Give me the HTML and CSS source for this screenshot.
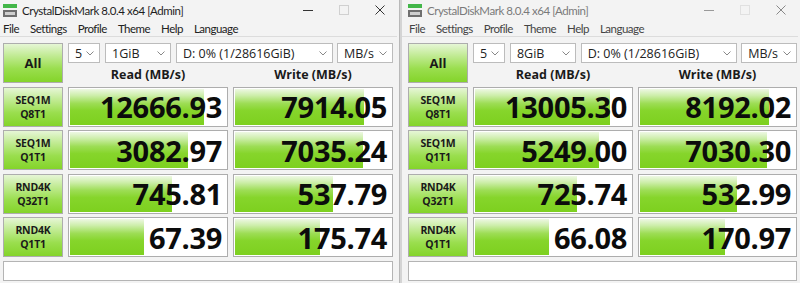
FILE: index.html
```html
<!DOCTYPE html>
<html>
<head>
<meta charset="utf-8">
<link rel="stylesheet" href="styles.css">
</head>
<body>
<div class="screen">
  <div class="win win-left">
    <div class="titlebar">
      <svg class="appicon" width="14" height="14" viewBox="0 0 14 14"><rect x="0" y="1" width="14" height="4" fill="#43b649"/><rect x="0" y="7" width="14" height="7" fill="#6f6f6f"/><rect x="2" y="9" width="10" height="3" fill="#cfcfcf"/></svg>
      <span class="title">CrystalDiskMark 8.0.4 x64 [Admin]</span>
      <div class="controls">
        <svg width="10" height="10" viewBox="0 0 10 10"><line x1="0" y1="5.5" x2="10" y2="5.5" stroke="#333" stroke-width="1"/></svg>
        <svg width="10" height="10" viewBox="0 0 10 10"><rect x="0.5" y="0.5" width="9" height="9" fill="none" stroke="#d0d0d0" stroke-width="1"/></svg>
        <svg width="10" height="10" viewBox="0 0 10 10"><path d="M0.5 0.5 L9.5 9.5 M9.5 0.5 L0.5 9.5" stroke="#333" stroke-width="1"/></svg>
      </div>
    </div>
    <div class="menubar"><span>File</span><span>Settings</span><span>Profile</span><span>Theme</span><span>Help</span><span>Language</span></div>
    <div class="main">
      <div class="btn all">All</div>
      <div class="combos">
        <div class="combo c-count"><span>5</span><svg width="8" height="5" viewBox="0 0 8 5"><polyline points="0.5,0.5 4,4 7.5,0.5" fill="none" stroke="#888"/></svg></div>
        <div class="combo c-size"><span>1GiB</span><svg width="8" height="5" viewBox="0 0 8 5"><polyline points="0.5,0.5 4,4 7.5,0.5" fill="none" stroke="#888"/></svg></div>
        <div class="combo c-drive"><span>D: 0% (1/28616GiB)</span><svg width="8" height="5" viewBox="0 0 8 5"><polyline points="0.5,0.5 4,4 7.5,0.5" fill="none" stroke="#888"/></svg></div>
        <div class="combo c-unit"><span>MB/s</span><svg width="8" height="5" viewBox="0 0 8 5"><polyline points="0.5,0.5 4,4 7.5,0.5" fill="none" stroke="#888"/></svg></div>
      </div>
      <div class="head">Read (MB/s)</div>
      <div class="head">Write (MB/s)</div>

      <div class="btn label">SEQ1M<br>Q8T1</div>
      <div class="meter"><div class="bar" style="width:85.0%"></div><span class="val">12666.93</span></div>
      <div class="meter"><div class="bar" style="width:81.6%"></div><span class="val">7914.05</span></div>

      <div class="btn label">SEQ1M<br>Q1T1</div>
      <div class="meter"><div class="bar" style="width:74.8%"></div><span class="val">3082.97</span></div>
      <div class="meter"><div class="bar" style="width:80.8%"></div><span class="val">7035.24</span></div>

      <div class="btn label">RND4K<br>Q32T1</div>
      <div class="meter"><div class="bar" style="width:64.5%"></div><span class="val">745.81</span></div>
      <div class="meter"><div class="bar" style="width:62.2%"></div><span class="val">537.79</span></div>

      <div class="btn label">RND4K<br>Q1T1</div>
      <div class="meter"><div class="bar" style="width:47.1%"></div><span class="val">67.39</span></div>
      <div class="meter"><div class="bar" style="width:54.1%"></div><span class="val">175.74</span></div>

      <div class="comment"></div>
    </div>
  </div>
  <div class="divider"></div>
  <div class="win win-right inactive">
    <div class="titlebar">
      <svg class="appicon" width="14" height="14" viewBox="0 0 14 14"><rect x="0" y="1" width="14" height="4" fill="#43b649"/><rect x="0" y="7" width="14" height="7" fill="#6f6f6f"/><rect x="2" y="9" width="10" height="3" fill="#cfcfcf"/></svg>
      <span class="title">CrystalDiskMark 8.0.4 x64 [Admin]</span>
      <div class="controls">
        <svg width="10" height="10" viewBox="0 0 10 10"><line x1="0" y1="5.5" x2="10" y2="5.5" stroke="#999" stroke-width="1"/></svg>
        <svg width="10" height="10" viewBox="0 0 10 10"><rect x="0.5" y="0.5" width="9" height="9" fill="none" stroke="#e0e0e0" stroke-width="1"/></svg>
        <svg width="10" height="10" viewBox="0 0 10 10"><path d="M0.5 0.5 L9.5 9.5 M9.5 0.5 L0.5 9.5" stroke="#888" stroke-width="1"/></svg>
      </div>
    </div>
    <div class="menubar"><span>File</span><span>Settings</span><span>Profile</span><span>Theme</span><span>Help</span><span>Language</span></div>
    <div class="main">
      <div class="btn all">All</div>
      <div class="combos">
        <div class="combo c-count"><span>5</span><svg width="8" height="5" viewBox="0 0 8 5"><polyline points="0.5,0.5 4,4 7.5,0.5" fill="none" stroke="#888"/></svg></div>
        <div class="combo c-size"><span>8GiB</span><svg width="8" height="5" viewBox="0 0 8 5"><polyline points="0.5,0.5 4,4 7.5,0.5" fill="none" stroke="#888"/></svg></div>
        <div class="combo c-drive"><span>D: 0% (1/28616GiB)</span><svg width="8" height="5" viewBox="0 0 8 5"><polyline points="0.5,0.5 4,4 7.5,0.5" fill="none" stroke="#888"/></svg></div>
        <div class="combo c-unit"><span>MB/s</span><svg width="8" height="5" viewBox="0 0 8 5"><polyline points="0.5,0.5 4,4 7.5,0.5" fill="none" stroke="#888"/></svg></div>
      </div>
      <div class="head">Read (MB/s)</div>
      <div class="head">Write (MB/s)</div>

      <div class="btn label">SEQ1M<br>Q8T1</div>
      <div class="meter"><div class="bar" style="width:85.2%"></div><span class="val">13005.30</span></div>
      <div class="meter"><div class="bar" style="width:81.9%"></div><span class="val">8192.02</span></div>

      <div class="btn label">SEQ1M<br>Q1T1</div>
      <div class="meter"><div class="bar" style="width:78.7%"></div><span class="val">5249.00</span></div>
      <div class="meter"><div class="bar" style="width:80.8%"></div><span class="val">7030.30</span></div>

      <div class="btn label">RND4K<br>Q32T1</div>
      <div class="meter"><div class="bar" style="width:64.3%"></div><span class="val">725.74</span></div>
      <div class="meter"><div class="bar" style="width:62.1%"></div><span class="val">532.99</span></div>

      <div class="btn label">RND4K<br>Q1T1</div>
      <div class="meter"><div class="bar" style="width:47.0%"></div><span class="val">66.08</span></div>
      <div class="meter"><div class="bar" style="width:53.9%"></div><span class="val">170.97</span></div>

      <div class="comment"></div>
    </div>
  </div>
</div>
</body>
</html>
```

FILE: styles.css
```css
* { box-sizing: border-box; }
html, body { margin: 0; padding: 0; }
body {
  width: 800px;
  height: 283px;
  overflow: hidden;
  background: #f3f3f3;
  font-family: "Open Sans", "Noto Sans", sans-serif;
  color: #1e1e1e;
}
.screen {
  display: flex;
  width: 800px;
  height: 283px;
}
.win {
  background: #f3f3f3;
  display: flex;
  flex-direction: column;
}
.win-left { width: 399px; padding: 0 0 0 3px; }
.win-right { width: 398px; padding: 0 0 0 6px; }
.divider {
  width: 3px;
  background: #d4d4d4;
  border-left: 1px solid #b8b8b8;
}
.titlebar {
  height: 20px;
  display: flex;
  align-items: center;
  font-family: "Lato", "Open Sans", sans-serif;
  font-size: 11.5px;
  letter-spacing: -0.45px;
}
.appicon { margin-right: 5px; flex: none; }
.title { color: #1e1e1e; }
.inactive .title { color: #7a7a7a; }
.controls {
  margin-left: auto;
  display: flex;
  gap: 26px;
  padding-right: 14px;
  align-items: center;
}
.menubar {
  height: 17px;
  display: flex;
  align-items: center;
  gap: 11px;
  font-family: "Lato", "Open Sans", sans-serif;
  font-size: 11.5px;
  letter-spacing: -0.5px;
  color: #222;
  border-bottom: 1px solid #dcdcdc;
  margin-right: 2px;
  margin-left: -3px;
  padding-left: 3px;
}
.inactive .menubar { margin-left: -6px; padding-left: 7px; color: #444; }
.main {
  margin-top: 6px;
  display: grid;
  grid-template-columns: 60px 160px 160px;
  grid-template-rows: 20px 16.5px 40px 40px 40px 40px 20px;
  column-gap: 5px;
  row-gap: 3.5px;
}
.win-right .main { grid-template-columns: 60px 160px 159px; column-gap: 5px; }
.btn {
  border: 1px solid #adadad;
  background: linear-gradient(180deg, #e6f6d6 0%, #c2eb95 30%, #9ade4e 65%, #84d42a 100%);
  display: flex;
  align-items: center;
  justify-content: center;
  text-align: center;
  font-weight: 700;
  color: #1a1a1a;
}
.all {
  grid-row: 1 / span 2;
  font-size: 13px;
}
.label {
  font-size: 10.5px;
  line-height: 14px;
  letter-spacing: -0.2px;
}
.combos {
  grid-column: 2 / span 2;
  display: flex;
  gap: 5px;
}
.combo {
  background: #fff;
  border: 1px solid #bcbcbc;
  display: flex;
  align-items: center;
  justify-content: space-between;
  padding: 0 5px 0 6px;
  font-size: 12.5px;
  color: #222;
}
.c-count { width: 32px; }
.c-size { width: 66px; }
.c-drive { width: 157px; }
.c-unit { width: 56px; margin-left: -1px; }
.head {
  font-weight: 700;
  font-size: 12.5px;
  text-align: center;
  align-self: center;
  color: #1a1a1a;
}
.meter {
  position: relative;
  background: #fff;
  border: 1px solid #adadad;
  padding: 1px;
  display: flex;
  align-items: center;
  justify-content: flex-end;
  overflow: hidden;
}
.bar {
  position: absolute;
  left: 1px;
  top: 1px;
  bottom: 1px;
  background: linear-gradient(180deg, #eef8e4 0%, #cdeeaa 18%, #9ddd55 40%, #86d52b 60%, #7dd01f 100%);
}
.val {
  position: relative;
  font-size: 29px;
  font-weight: 700;
  color: #0c0c0c;
  letter-spacing: -0.3px;
  padding-right: 4px;
  line-height: 1;
}
.comment {
  grid-column: 1 / span 3;
  background: #fff;
  border: 1px solid #b4b4b4;
}
```
